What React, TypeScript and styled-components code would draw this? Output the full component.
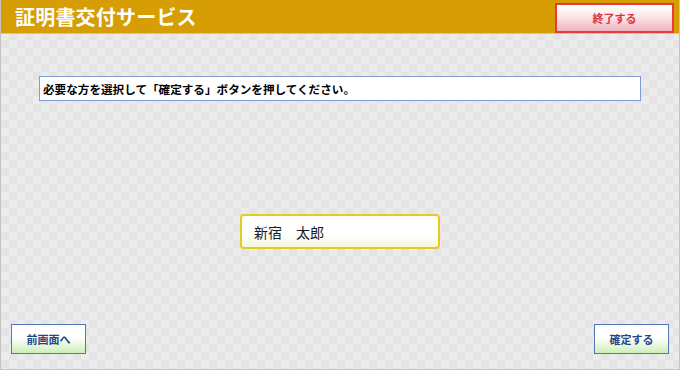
import React from 'react';
import styled, { createGlobalStyle } from 'styled-components';

const GlobalStyle = createGlobalStyle`
  html, body {
    margin: 0;
    padding: 0;
    background: #ffffff;
  }
  body {
    font-family: "Noto Sans CJK JP", "Noto Sans", sans-serif;
  }
`;

const Screen = styled.div`
  box-sizing: border-box;
  width: 680px;
  height: 370px;
  display: flex;
  flex-direction: column;
  border: 1px solid #c4c4c4;
  border-top: none;
  background-color: #ececec;
  background-image: conic-gradient(
    #e4e4e4 0 25%,
    #ececec 0 50%,
    #e4e4e4 0 75%,
    #ececec 0
  );
  background-size: 16px 16px;
`;

const Header = styled.header`
  height: 34px;
  flex: none;
  display: flex;
  align-items: center;
  justify-content: space-between;
  padding: 0 5px 0 14px;
  background: #d69e04;
  border-bottom: 1px solid #e8c860;
  box-sizing: border-box;
`;

const Title = styled.h1`
  margin: 0;
  color: #ffffff;
  font-size: 20px;
  font-weight: 700;
  letter-spacing: 0.2px;
`;

const ExitButton = styled.button`
  box-sizing: border-box;
  width: 119px;
  height: 30px;
  margin-top: 2px;
  border: 2px solid #e83a3a;
  background: linear-gradient(#ffffff 0%, #fbe6ea 45%, #f0b4bf 100%);
  color: #d8343f;
  font-family: inherit;
  font-size: 11px;
  font-weight: 700;
  cursor: pointer;
`;

const Body = styled.main`
  flex: 1;
  display: flex;
  flex-direction: column;
  padding: 42px 10px 15px 10px;
`;

const Instruction = styled.div`
  box-sizing: border-box;
  height: 25px;
  margin: 0 28px;
  padding: 0 3px;
  display: flex;
  align-items: center;
  background: #ffffff;
  border: 1px solid #7f9cd4;
  color: #000000;
  font-size: 11.6px;
  font-weight: 700;
`;

const NameCard = styled.button`
  box-sizing: border-box;
  align-self: center;
  width: 200px;
  height: 35px;
  margin-top: 113px;
  padding: 0 12px;
  display: flex;
  align-items: center;
  border: 2px solid #e6cc1c;
  border-radius: 4px;
  background: linear-gradient(#ffffff 0%, #ffffff 60%, #f1f8d8 100%);
  color: #1a1a1a;
  font-family: inherit;
  font-size: 14px;
  cursor: pointer;
`;

const Footer = styled.footer`
  margin-top: auto;
  display: flex;
  justify-content: space-between;
`;

const NavButton = styled.button`
  box-sizing: border-box;
  width: 75px;
  height: 30px;
  border: 1px solid #5476b8;
  background: linear-gradient(#ffffff 0%, #ffffff 45%, #cdefb8 100%);
  color: #1f4788;
  font-family: inherit;
  font-size: 11px;
  font-weight: 700;
  cursor: pointer;
`;

const App: React.FC = () => {
  return (
    <>
      <GlobalStyle />
      <Screen>
        <Header>
          <Title>証明書交付サービス</Title>
          <ExitButton>終了する</ExitButton>
        </Header>
        <Body>
          <Instruction>必要な方を選択して「確定する」ボタンを押してください。</Instruction>
          <NameCard>新宿　太郎</NameCard>
          <Footer>
            <NavButton>前画面へ</NavButton>
            <NavButton>確定する</NavButton>
          </Footer>
        </Body>
      </Screen>
    </>
  );
};

export default App;
